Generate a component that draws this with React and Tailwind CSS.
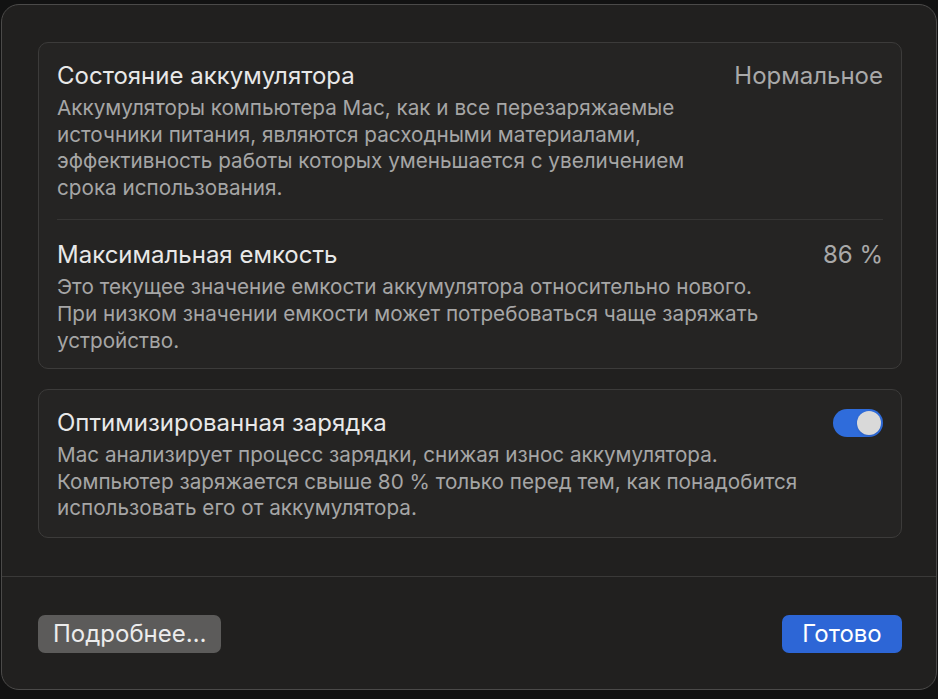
import React from 'react';

function Toggle({ on }) {
  return (
    <div
      className={`w-[50px] h-[28px] rounded-full flex items-center px-[2px] ${
        on ? 'bg-[#2f6cdb] justify-end' : 'bg-[#4a4948] justify-start'
      }`}
    >
      <div className="w-[24px] h-[24px] rounded-full bg-[#d9d9d9] shadow" />
    </div>
  );
}

function Row({ title, value, children }) {
  return (
    <div>
      <div className="flex items-center justify-between h-[26px]">
        <span className="text-[24px] text-[#e8e8e8]">{title}</span>
        {value}
      </div>
      <p className="mt-[6px] text-[20.7px] leading-[26.6px] text-[#a6a6a6]">
        {children}
      </p>
    </div>
  );
}

export default function App() {
  return (
    <div
      className="w-[938px] h-[699px] bg-[#121212] pt-[4px] pl-[1px] pr-[1px] pb-[9px]"
      style={{ fontFamily: 'Inter, "Noto Sans", sans-serif' }}
    >
      <div className="h-full rounded-[18px] border border-[#4b4a49] bg-[#21201f] flex flex-col">
        <div className="pl-[36px] pr-[34px] pt-[37px]">
          <div className="rounded-[10px] border border-[#3c3b3a] bg-[#252423] px-[18px] pt-[20px] pb-[14px]">
            <Row
              title="Состояние аккумулятора"
              value={<span className="text-[24px] text-[#a9a9a9]">Нормальное</span>}
            >
              Аккумуляторы компьютера Mac, как и все перезаряжаемые
              <br />
              источники питания, являются расходными материалами,
              <br />
              эффективность работы которых уменьшается с увеличением
              <br />
              срока использования.
            </Row>
            <div className="h-px bg-[#363534] mt-[18px] mb-[22px]" />
            <Row
              title="Максимальная емкость"
              value={<span className="text-[24px] text-[#a9a9a9]">86 %</span>}
            >
              Это текущее значение емкости аккумулятора относительно нового.
              <br />
              При низком значении емкости может потребоваться чаще заряжать
              <br />
              устройство.
            </Row>
          </div>

          <div className="mt-[20px] rounded-[10px] border border-[#3c3b3a] bg-[#252423] px-[18px] pt-[20px] pb-[15px]">
            <Row title="Оптимизированная зарядка" value={<Toggle on />}>
              Mac анализирует процесс зарядки, снижая износ аккумулятора.
              <br />
              Компьютер заряжается свыше 80 % только перед тем, как понадобится
              <br />
              использовать его от аккумулятора.
            </Row>
          </div>
        </div>

        <div className="mt-[38px] h-px bg-[#3a3938]" />

        <div className="flex justify-between items-center pl-[36px] pr-[34px] pt-[38px]">
          <button className="h-[38px] w-[183px] rounded-[7px] bg-[#5c5b5a] text-[24px] text-[#ececec] text-left pl-[15px]">
            Подробнее…
          </button>
          <button className="h-[38px] w-[120px] rounded-[7px] bg-[#2d66d6] text-[24px] text-white">
            Готово
          </button>
        </div>
      </div>
    </div>
  );
}
